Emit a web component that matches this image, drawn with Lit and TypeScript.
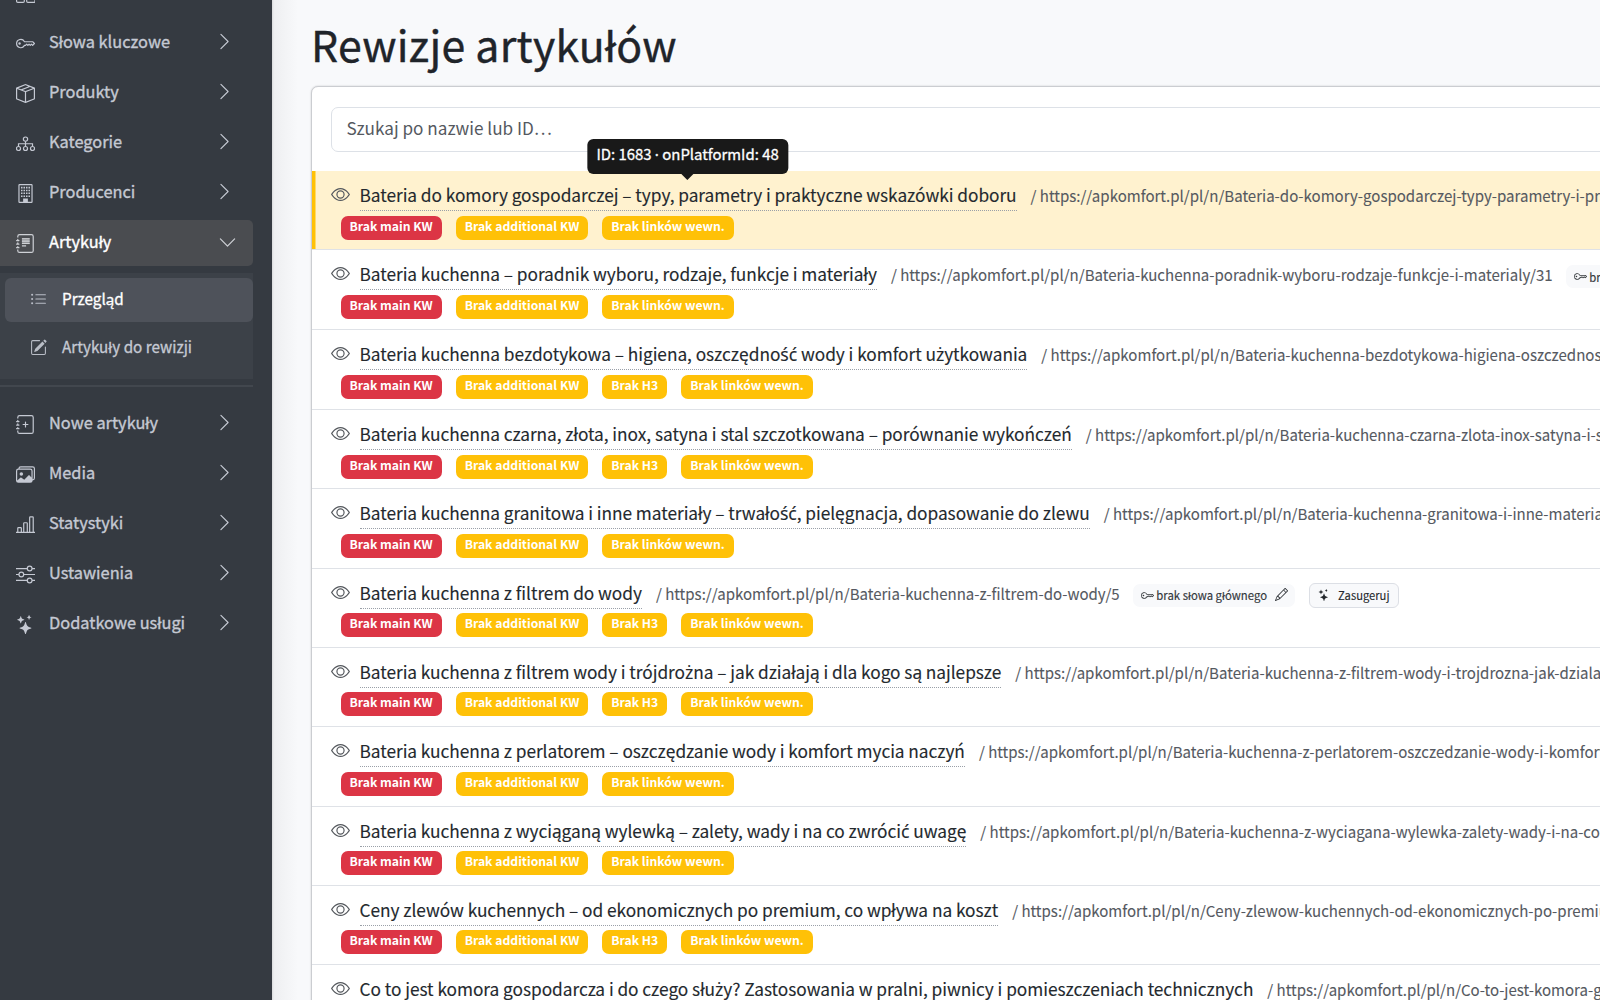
import { LitElement, html, css, svg, nothing } from "lit";
import { customElement, property } from "lit/decorators.js";
import { classMap } from "lit/directives/class-map.js";

const JOURNAL = svg`<path d="M3 0h10a2 2 0 0 1 2 2v12a2 2 0 0 1-2 2H3a2 2 0 0 1-2-2v-1h1v1a1 1 0 0 0 1 1h10a1 1 0 0 0 1-1V2a1 1 0 0 0-1-1H3a1 1 0 0 0-1 1v1H1V2a2 2 0 0 1 2-2"/><path d="M1 5v-.5a.5.5 0 0 1 1 0V5h.5a.5.5 0 0 1 0 1h-2a.5.5 0 0 1 0-1zm0 3v-.5a.5.5 0 0 1 1 0V8h.5a.5.5 0 0 1 0 1h-2a.5.5 0 0 1 0-1zm0 3v-.5a.5.5 0 0 1 1 0v.5h.5a.5.5 0 0 1 0 1h-2a.5.5 0 0 1 0-1z"/>`;

const ICONS: Record<string, unknown> = {
  grid: svg`<path fill="none" stroke="currentColor" d="M2.5 1.5h3a1 1 0 0 1 1 1v3a1 1 0 0 1-1 1h-3a1 1 0 0 1-1-1v-3a1 1 0 0 1 1-1zm8 0h3a1 1 0 0 1 1 1v3a1 1 0 0 1-1 1h-3a1 1 0 0 1-1-1v-3a1 1 0 0 1 1-1zm-9.5 8h5a1 1 0 0 1 1 1v4a1 1 0 0 1-1 1h-4.500a1 1 0 0 1-1-1v-4a1 1 0 0 1 1-1zm9 0h5a1 1 0 0 1 1 1v4a1 1 0 0 1-1 1h-5a1 1 0 0 1-1-1v-4a1 1 0 0 1 1-1z"/>`,
  key: svg`<path d="M0 8a4 4 0 0 1 7.465-2H14a.5.5 0 0 1 .354.146l1.5 1.5a.5.5 0 0 1 0 .708l-1.5 1.5a.5.5 0 0 1-.708 0L13 9.207l-.646.647a.5.5 0 0 1-.708 0L11 9.207l-.646.647a.5.5 0 0 1-.708 0L9 9.207l-.646.647A.5.5 0 0 1 8 10h-.535A4 4 0 0 1 0 8m4-3a3 3 0 1 0 2.712 4.285A.5.5 0 0 1 7.163 9h.63l.853-.854a.5.5 0 0 1 .708 0l.646.647.646-.647a.5.5 0 0 1 .708 0l.646.647.646-.647a.5.5 0 0 1 .708 0l.646.647.793-.793-1-1h-6.63a.5.5 0 0 1-.451-.285A3 3 0 0 0 4 5"/><path d="M4 8a1 1 0 1 1-2 0 1 1 0 0 1 2 0"/>`,
  box: svg`<path d="M8.186 1.113a.5.5 0 0 0-.372 0L1.846 3.5l2.404.961L10.404 2zm3.564 1.426L5.596 5 8 5.961 14.154 3.5zm3.25 1.7-6.5 2.6v7.922l6.5-2.6V4.24zM7.5 14.762V6.838L1 4.239v7.923zM7.443.184a1.5 1.5 0 0 1 1.114 0l7.129 2.852A.5.5 0 0 1 16 3.5v8.662a1 1 0 0 1-.629.928l-7.185 2.874a.5.5 0 0 1-.372 0L.63 13.09a1 1 0 0 1-.63-.928V3.5a.5.5 0 0 1 .314-.464z"/>`,
  tree: svg`<g fill="none" stroke="currentColor"><circle cx="8" cy="4.3" r="1.8"/><circle cx="2.1" cy="12.2" r="1.7"/><circle cx="8" cy="12.2" r="1.7"/><circle cx="13.9" cy="12.2" r="1.7"/><path d="M8 6.1v4.4M2.1 10.4V8.2h11.8v2.2"/></g>`,
  building: svg`<path fill="none" stroke="currentColor" d="M3 .5h10a.5.5 0 0 1 .5.5v14a.5.5 0 0 1-.5.5H3a.5.5 0 0 1-.5-.5V1A.5.5 0 0 1 3 .5z"/><path d="M6 12.2h4V16H6zM4.2 2.4h1.3v1.3H4.2zm2.1 0h1.3v1.3H6.3zm2.1 0h1.3v1.3H8.4zm2.1 0h1.3v1.3h-1.3zM4.2 4.8h1.3v1.3H4.2zm2.1 0h1.3v1.3H6.3zm2.1 0h1.3v1.3H8.4zm2.1 0h1.3v1.3h-1.3zM4.2 7.2h1.3v1.3H4.2zm2.1 0h1.3v1.3H6.3zm2.1 0h1.3v1.3H8.4zm2.1 0h1.3v1.3h-1.3zM4.2 9.6h1.3v1.3H4.2zm2.1 0h1.3v1.3H6.3zm2.1 0h1.3v1.3H8.4zm2.1 0h1.3v1.3h-1.3z"/>`,
  journalText: svg`${JOURNAL}<path d="M5 3.5h6.5v1H5zm0 2h6.5v1H5zm0 2h6.5v1H5zm0 2h3.5v1H5z"/><path opacity=".55" d="M5 3.5h6.5v5H5z"/>`,
  journalPlus: svg`${JOURNAL}<path d="M8 5.5a.5.5 0 0 1 .5.5v1.5H10a.5.5 0 0 1 0 1H8.5V10a.5.5 0 0 1-1 0V8.5H6a.5.5 0 0 1 0-1h1.5V6a.5.5 0 0 1 .5-.5"/>`,
  list: svg`<path d="M5 11.5a.5.5 0 0 1 .5-.5h9a.5.5 0 0 1 0 1h-9a.5.5 0 0 1-.5-.5m0-4a.5.5 0 0 1 .5-.5h9a.5.5 0 0 1 0 1h-9a.5.5 0 0 1-.5-.5m0-4a.5.5 0 0 1 .5-.5h9a.5.5 0 0 1 0 1h-9a.5.5 0 0 1-.5-.5m-3 1a1 1 0 1 0 0-2 1 1 0 0 0 0 2m0 4a1 1 0 1 0 0-2 1 1 0 0 0 0 2m0 4a1 1 0 1 0 0-2 1 1 0 0 0 0 2"/>`,
  edit: svg`<path d="M15.502 1.94a.5.5 0 0 1 0 .706L14.459 3.69l-2-2L13.502.646a.5.5 0 0 1 .707 0l1.293 1.293zm-1.75 2.456-2-2L4.939 9.21a.5.5 0 0 0-.121.196l-.805 2.414a.25.25 0 0 0 .316.316l2.414-.805a.5.5 0 0 0 .196-.12l6.813-6.814z"/><path d="M1 13.5A1.5 1.5 0 0 0 2.5 15h11a1.5 1.5 0 0 0 1.5-1.5v-6a.5.5 0 0 0-1 0v6a.5.5 0 0 1-.5.5h-11a.5.5 0 0 1-.5-.5v-11a.5.5 0 0 1 .5-.5H9a.5.5 0 0 0 0-1H2.5A1.5 1.5 0 0 0 1 2.5z"/>`,
  images: svg`<path d="M4.502 9a1.5 1.5 0 1 0 0-3 1.5 1.5 0 0 0 0 3"/><path d="M14.002 13a2 2 0 0 1-2 2h-10a2 2 0 0 1-2-2V5A2 2 0 0 1 2 3a2 2 0 0 1 2-2h10a2 2 0 0 1 2 2v8a2 2 0 0 1-1.998 2M14 2H4a1 1 0 0 0-1 1h9.002a2 2 0 0 1 2 2v7A1 1 0 0 0 15 11V3a1 1 0 0 0-1-1M2.002 4a1 1 0 0 0-1 1v8l2.646-2.354a.5.5 0 0 1 .63-.062l2.66 1.773 3.71-3.71a.5.5 0 0 1 .577-.094l1.777 1.947V5a1 1 0 0 0-1-1z"/>`,
  bars: svg`<path fill="none" stroke="currentColor" d="M0 14.6h16M1.5 14.5v-3.3a.5.5 0 0 1 .5-.5h2a.5.5 0 0 1 .5.5v3.3M6.5 14.5V7a.5.5 0 0 1 .5-.5h2a.5.5 0 0 1 .5.5v7.5M11.5 14.5V2a.5.5 0 0 1 .5-.5h2a.5.5 0 0 1 .5.5v12.5"/>`,
  sliders: svg`<g fill="none" stroke="currentColor"><circle cx="11.5" cy="3" r="2"/><circle cx="4.5" cy="8" r="2"/><circle cx="11.5" cy="13" r="2"/><path d="M0 3h9.5M13.5 3H16M0 8h2.5M6.5 8H16M0 13h9.5M13.5 13H16"/></g>`,
  stars: svg`<path d="M7.657 6.247c.11-.33.576-.33.686 0l.645 1.937a2.89 2.89 0 0 0 1.829 1.828l1.936.645c.33.11.33.576 0 .686l-1.937.645a2.89 2.89 0 0 0-1.828 1.829l-.645 1.936a.361.361 0 0 1-.686 0l-.645-1.937a2.89 2.89 0 0 0-1.828-1.828l-1.937-.645a.361.361 0 0 1 0-.686l1.937-.645a2.89 2.89 0 0 0 1.828-1.828zM3.794 1.148a.217.217 0 0 1 .412 0l.387 1.162c.173.518.579.924 1.097 1.097l1.162.387a.217.217 0 0 1 0 .412l-1.162.387A1.73 1.73 0 0 0 4.593 5.69l-.387 1.162a.217.217 0 0 1-.412 0L3.407 5.69A1.73 1.73 0 0 0 2.31 4.593l-1.162-.387a.217.217 0 0 1 0-.412l1.162-.387A1.73 1.73 0 0 0 3.407 2.31zM10.863.099a.145.145 0 0 1 .274 0l.258.774c.115.346.386.617.732.732l.774.258a.145.145 0 0 1 0 .274l-.774.258a1.16 1.16 0 0 0-.732.732l-.258.774a.145.145 0 0 1-.274 0l-.258-.774a1.16 1.16 0 0 0-.732-.732L9.1 2.137a.145.145 0 0 1 0-.274l.774-.258c.346-.115.617-.386.732-.732z"/>`,
  chevron: svg`<path d="M4.646 1.646a.5.5 0 0 1 .708 0l6 6a.5.5 0 0 1 0 .708l-6 6a.5.5 0 0 1-.708-.708L10.293 8 4.646 2.354a.5.5 0 0 1 0-.708"/>`,
  eye: svg`<path d="M16 8s-3-5.5-8-5.5S0 8 0 8s3 5.5 8 5.5S16 8 16 8M1.173 8a13 13 0 0 1 1.66-2.043C4.12 4.668 5.88 3.5 8 3.5s3.879 1.168 5.168 2.457A13 13 0 0 1 14.828 8q-.086.13-.195.288c-.335.48-.83 1.12-1.465 1.755C11.879 11.332 10.119 12.5 8 12.5s-3.879-1.168-5.168-2.457A13 13 0 0 1 1.172 8z"/><path d="M8 5.5a2.5 2.5 0 1 0 0 5 2.5 2.5 0 0 0 0-5M4.5 8a3.5 3.5 0 1 1 7 0 3.5 3.5 0 0 1-7 0"/>`,
  pencil: svg`<path d="M12.146.146a.5.5 0 0 1 .708 0l3 3a.5.5 0 0 1 0 .708l-10 10a.5.5 0 0 1-.168.11l-5 2a.5.5 0 0 1-.65-.65l2-5a.5.5 0 0 1 .11-.168zM11.207 2.5 13.5 4.793 14.793 3.5 12.5 1.207zm1.586 3L10.5 3.207 4 9.707V10h.5a.5.5 0 0 1 .5.5v.5h.5a.5.5 0 0 1 .5.5v.5h.293zm-9.761 5.175-.106.106-1.528 3.821 3.821-1.528.106-.106A.5.5 0 0 1 5 12.5V12h-.5a.5.5 0 0 1-.5-.5V11h-.5a.5.5 0 0 1-.468-.325"/>`,
};

const icon = (name: string, cls = "") =>
  html`<svg class="icon ${cls}" viewBox="0 0 16 16" fill="currentColor" aria-hidden="true">${ICONS[name]}</svg>`;

const accented = (text: string) =>
  text.split(/([śćż·])/).map((part) => (/^[śćż·]$/.test(part) ? html`<span class="alt">${part}</span>` : part));

const base = css`
  *, *::before, *::after { box-sizing: border-box; }
  .icon { display: block; flex: none; }
  .alt { font-family: "Noto Sans", sans-serif; font-size: 1.02em; line-height: 1; }
`;

interface NavItem { icon: string; label: string; children?: NavItem[]; }

const NAV: NavItem[] = [
  { icon: "grid", label: "" },
  { icon: "key", label: "Słowa kluczowe" },
  { icon: "box", label: "Produkty" },
  { icon: "tree", label: "Kategorie" },
  { icon: "building", label: "Producenci" },
  {
    icon: "journalText", label: "Artykuły",
    children: [
      { icon: "list", label: "Przegląd" },
      { icon: "edit", label: "Artykuły do rewizji" },
    ],
  },
  { icon: "journalPlus", label: "Nowe artykuły" },
  { icon: "images", label: "Media" },
  { icon: "bars", label: "Statystyki" },
  { icon: "sliders", label: "Ustawienia" },
  { icon: "stars", label: "Dodatkowe usługi" },
];

@customElement("side-nav")
class SideNav extends LitElement {
  static styles = [base, css`
    :host {
      display: block; flex: none; width: 272px; height: 1000px; overflow: hidden;
      background: #353a41; color: #c5c9d3;
    }
    .menu { display: flex; flex-direction: column; margin-top: -30px; width: 253px; }
    .item {
      display: flex; align-items: center; height: 45.5px; margin-bottom: 4.5px;
      padding: 0 19px 0 16px; border-radius: 0 5px 5px 0;
      font-size: 16.35px; line-height: 22px; -webkit-text-stroke: .35px currentColor;
    }
    .label { flex: 1; margin-left: 14px; padding-bottom: 3px; white-space: nowrap; }
    .item .icon { width: 19px; height: 19px; margin-top: 2px; -webkit-text-stroke: 0; }
    .item .chev { margin-top: -3px; }
    .open { background: #4a4c50; color: #fff; }
    .open .icon { color: #cfd1d6; }
    .open .chev { transform: rotate(90deg); margin: 0 -3px 0 0; }
    .sub {
      height: 106px; margin: 3px 0 6px; padding: 5px 0 0 5px; background: #3c4148;
    }
    .child {
      display: flex; align-items: center; height: 44px; margin-bottom: 4px; padding-left: 25px;
      border-radius: 6px; font-size: 15.25px; line-height: 22px; -webkit-text-stroke: .3px currentColor;
    }
    .child .icon { width: 17px; height: 17px; margin-top: -1px; -webkit-text-stroke: 0; color: #b9bdc6; }
    .child .label { margin-left: 15px; padding-bottom: 5px; }
    .current { background: #4e525a; color: #fff; }
    .rule { height: 2px; margin-bottom: 14px; background: #42474e; }
  `];

  render() {
    return html`<nav class="menu">${NAV.map((n) => html`
      <div class=${classMap({ item: true, open: !!n.children })}>
        ${icon(n.icon)}<span class="label">${n.label}</span>${icon("chevron", "chev")}
      </div>
      ${n.children ? html`
        <div class="sub">${n.children.map((c, i) => html`
          <div class=${classMap({ child: true, current: i === 0 })}>${icon(c.icon)}<span class="label">${c.label}</span></div>`)}
        </div>
        <div class="rule"></div>` : nothing}
    `)}</nav>`;
  }
}

interface Article { title: string; slug: string; h3?: boolean; }

const ARTICLES: Article[] = [
  { title: "Bateria do komory gospodarczej – typy, parametry i praktyczne wskazówki doboru", slug: "Bateria-do-komory-gospodarczej-typy-parametry-i-praktyczne-wskazowki-doboru/48" },
  { title: "Bateria kuchenna – poradnik wyboru, rodzaje, funkcje i materiały", slug: "Bateria-kuchenna-poradnik-wyboru-rodzaje-funkcje-i-materialy/31" },
  { title: "Bateria kuchenna bezdotykowa – higiena, oszczędność wody i komfort użytkowania", slug: "Bateria-kuchenna-bezdotykowa-higiena-oszczednosc-wody-i-komfort", h3: true },
  { title: "Bateria kuchenna czarna, złota, inox, satyna i stal szczotkowana – porównanie wykończeń", slug: "Bateria-kuchenna-czarna-zlota-inox-satyna-i-stal-szczotkowana", h3: true },
  { title: "Bateria kuchenna granitowa i inne materiały – trwałość, pielęgnacja, dopasowanie do zlewu", slug: "Bateria-kuchenna-granitowa-i-inne-materialy-trwalosc" },
  { title: "Bateria kuchenna z filtrem do wody", slug: "Bateria-kuchenna-z-filtrem-do-wody/5", h3: true },
  { title: "Bateria kuchenna z filtrem wody i trójdrożna – jak działają i dla kogo są najlepsze", slug: "Bateria-kuchenna-z-filtrem-wody-i-trojdrozna-jak-dzialaja-i-dla-kogo", h3: true },
  { title: "Bateria kuchenna z perlatorem – oszczędzanie wody i komfort mycia naczyń", slug: "Bateria-kuchenna-z-perlatorem-oszczedzanie-wody-i-komfort-mycia-naczyn" },
  { title: "Bateria kuchenna z wyciąganą wylewką – zalety, wady i na co zwrócić uwagę", slug: "Bateria-kuchenna-z-wyciagana-wylewka-zalety-wady-i-na-co-zwrocic-uwage" },
  { title: "Ceny zlewów kuchennych – od ekonomicznych po premium, co wpływa na koszt", slug: "Ceny-zlewow-kuchennych-od-ekonomicznych-po-premium-co-wplywa-na-koszt", h3: true },
  { title: "Co to jest komora gospodarcza i do czego służy? Zastosowania w pralni, piwnicy i pomieszczeniach technicznych", slug: "Co-to-jest-komora-gospodarcza-i-do-czego-sluzy" },
];

@customElement("article-row")
class ArticleRow extends LitElement {
  @property({ attribute: false }) article!: Article;
  @property({ type: Boolean, reflect: true }) active = false;

  static styles = [base, css`
    :host {
      display: block; height: var(--row-height, 79.45px); padding: 8px 0 0 19px; overflow: visible;
      border-bottom: 1px solid #dfe2e7; white-space: nowrap;
    }
    :host([active]) { background: #fff2cf; box-shadow: inset 3.5px 0 0 #ffc107; }
    .line { display: flex; align-items: center; height: 32px; }
    .eye { width: 19px; height: 19px; margin: -1px 9.5px 0 0; color: #55595e; }
    .title {
      position: relative; height: 32px; line-height: 31px; font-size: 17.3px; letter-spacing: -.045px;
      color: #24292e; -webkit-text-stroke: .12px currentColor; border-bottom: 1px dotted #9aa0a8;
    }
    .tip {
      position: absolute; left: 50%; top: -40.5px; transform: translateX(-50%); margin-left: -.5px;
      height: 35px; padding: 0 9.5px; border-radius: 6px; background: #191919; color: #fff;
      font-size: 14.9px; letter-spacing: 0; line-height: 30px; -webkit-text-stroke: .3px #fff;
    }
    .tip::after {
      content: ""; position: absolute; left: 50%; top: 100%; margin-left: -6px;
      border: 6px solid transparent; border-top-color: #191919; border-bottom: 0;
    }
    .url {
      margin-left: 14px; padding-top: 2px; font-size: 15.04px; line-height: 24px; color: #55595f;
      -webkit-text-stroke: .1px currentColor;
    }
    .kw {
      display: flex; align-items: center; height: 23px; margin: 5px 0 0 13.2px; padding: 0 7px 0 8px;
      border-radius: 7px; background: #f8f9fb; color: #33373b; font-size: 11.35px; line-height: 20px;
      -webkit-text-stroke: .15px currentColor;
    }
    .kw .icon { width: 13px; height: 13px; margin-right: 2.5px; }
    .kw .pen { margin: -1px 0 0 8px; }
    .suggest {
      display: flex; align-items: center; height: 25px; margin: 5px 0 0 13.5px; padding: 0 8.5px;
      border: 1px solid #dcdfe5; border-radius: 6px; background: #f8f9fb; color: #24282c;
      font-size: 11.2px; line-height: 20px; -webkit-text-stroke: .1px currentColor;
    }
    .suggest .icon { width: 12px; height: 12px; margin-right: 8px; }
    .badges { display: flex; gap: 14px; padding: 4.5px 0 0 9.5px; }
    .badge {
      height: 24px; padding: 0 9px; border-radius: 7px; background: #ffc107; color: #fff;
      font-size: 12.2px; font-weight: 700; line-height: 21px;
    }
    .danger { background: #dc3545; }
  `];

  render() {
    const a = this.article;
    return html`
      <div class="line">
        ${icon("eye", "eye")}
        <span class="title">${accented(a.title)}${this.active ? html`<span class="tip">${accented("ID: 1683 · onPlatformId: 48")}</span>` : nothing}</span>
        <span class="url">/ https://apkomfort.pl/pl/n/${a.slug}</span>
        <span class="kw">${icon("key")}<span>brak słowa głównego</span>${icon("pencil", "pen")}</span>
        <span class="suggest">${icon("stars")}<span>Zasugeruj</span></span>
      </div>
      <div class="badges">
        <span class="badge danger">Brak main KW</span>
        <span class="badge">Brak additional KW</span>
        ${a.h3 ? html`<span class="badge">Brak H3</span>` : nothing}
        <span class="badge">Brak linków wewn.</span>
      </div>`;
  }
}

@customElement("app-root")
class AppRoot extends LitElement {
  static styles = [base, css`
    :host {
      display: flex; width: 1600px; height: 1000px; overflow: hidden; background: #f8f9fb;
      font-family: "Noto Sans CJK SC", "Noto Sans", sans-serif;
    }
    .main {
      flex: 1; min-width: 0; height: 1000px; overflow: hidden; padding-left: 39px;
      background: linear-gradient(90deg, #d9dadc 0, #eeeff1 2px, #f8f9fb 26px);
    }
    .heading {
      margin: 0; height: 86px; padding-top: 12px; font-size: 42.8px; font-weight: 400; line-height: 62px;
      letter-spacing: .27px; color: #1f242a; white-space: nowrap; -webkit-text-stroke: .4px currentColor;
    }
    .card {
      width: 1400px; height: 1200px; border: 1px solid #cbcdd1; border-radius: 7px; background: #fff;
      box-shadow: 0 0 2px rgba(0, 0, 0, .2);
    }
    .search {
      display: block; width: 1360px; height: 45px; margin: 19.5px 0 19.5px 19px; padding: 0 14.4px;
      border: 1px solid #dde1e7; border-radius: 7px; color: #55595f; font-size: 17.15px; line-height: 40px;
    }
    article-row:nth-of-type(2), article-row:nth-of-type(3) { --row-height: 79.95px; }
    article-row:nth-of-type(4), article-row:nth-of-type(5), article-row:nth-of-type(6) { --row-height: 79.12px; }
  `];

  render() {
    return html`
      <side-nav></side-nav>
      <main class="main">
        <h1 class="heading">Rewizje artykułów</h1>
        <section class="card">
          <div class="search">Szukaj po nazwie lub ID…</div>
          ${ARTICLES.map((a, i) => html`<article-row .article=${a} ?active=${i === 0}></article-row>`)}
        </section>
      </main>`;
  }
}
